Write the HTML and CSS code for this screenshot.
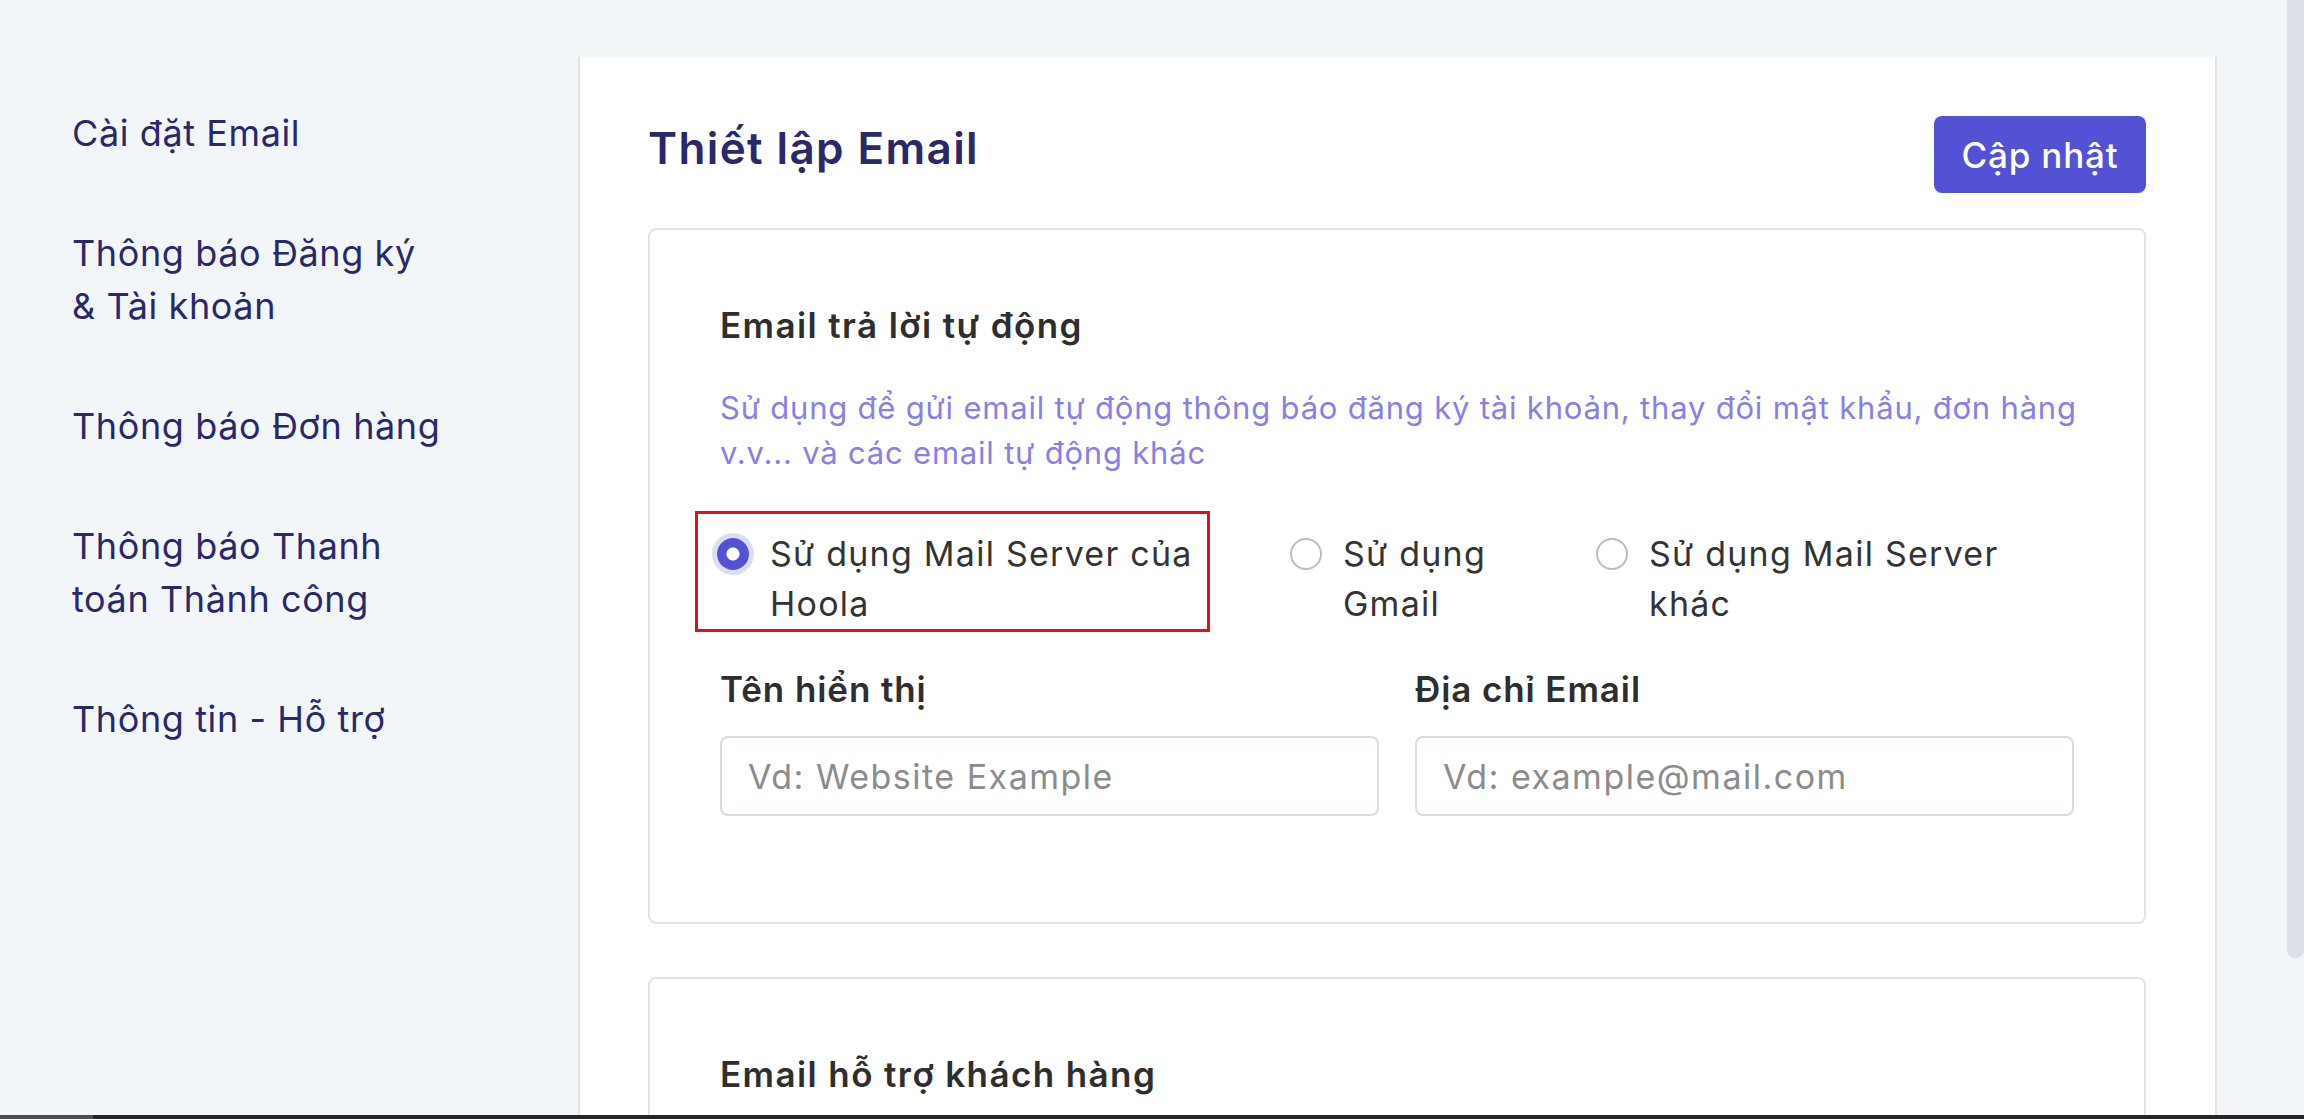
FILE: index.html
```html
<!DOCTYPE html>
<html lang="vi">
  <head>
    <meta charset="UTF-8" />
    <meta name="viewport" content="width=device-width, initial-scale=1.0" />
    <title>Thiết lập Email</title>
    <link rel="stylesheet" href="styles.css">
  </head>
  <body>
    <div class="app">
      <nav class="sidebar">
        <a class="nav-item">Cài đặt Email</a>
        <a class="nav-item">Thông báo Đăng ký<br />&amp; Tài khoản</a>
        <a class="nav-item">Thông báo Đơn hàng</a>
        <a class="nav-item">Thông báo Thanh<br />toán Thành công</a>
        <a class="nav-item">Thông tin - Hỗ trợ</a>
      </nav>

      <main class="panel">
        <div class="panel-head">
          <h1 class="page-title">Thiết lập Email</h1>
          <button class="btn-primary">Cập nhật</button>
        </div>

        <section class="card">
          <h2 class="card-title">Email trả lời tự động</h2>
          <p class="card-desc">
            Sử dụng để gửi email tự động thông báo đăng ký tài khoản, thay đổi mật khẩu, đơn hàng<br />
            v.v... và các email tự động khác
          </p>

          <div class="radios">
            <label class="option option-1 is-marked">
              <span class="radio is-checked"></span>
              <span class="option-text">Sử dụng Mail Server của<br />Hoola</span>
            </label>
            <label class="option option-2">
              <span class="radio"></span>
              <span class="option-text">Sử dụng<br />Gmail</span>
            </label>
            <label class="option option-3">
              <span class="radio"></span>
              <span class="option-text">Sử dụng Mail Server<br />khác</span>
            </label>
          </div>

          <div class="fields">
            <div class="field">
              <div class="field-label">Tên hiển thị</div>
              <input class="field-input" type="text" placeholder="Vd: Website Example" />
            </div>
            <div class="field">
              <div class="field-label">Địa chỉ Email</div>
              <input class="field-input" type="text" placeholder="Vd: example@mail.com" />
            </div>
          </div>
        </section>

        <section class="card card-next">
          <h2 class="card-title">Email hỗ trợ khách hàng</h2>
        </section>
      </main>

      <div class="gutter"></div>
      <div class="scrollbar"><div class="scroll-thumb"></div></div>
    </div>
    <div class="taskbar"><div class="taskbar-start"></div></div>
  </body>
</html>
```

FILE: styles.css
```css
* {
  box-sizing: border-box;
}
:root {
  --bg: #f3f6f9;
  --navy: #29286b;
  --text: #333333;
  --primary: #5352d4;
  --line: #e2e4e8;
}
body {
  margin: 0;
  height: 1119px;
  overflow: hidden;
  background: var(--bg);
  font-family: Inter, "Noto Sans", sans-serif;
  color: var(--text);
}
.app {
  display: flex;
  height: 1115px;
  overflow: hidden;
}
/* --------------- sidebar */
.sidebar {
  width: 578px;
  flex: none;
  padding: 107px 0 0 72px;
  display: flex;
  flex-direction: column;
  gap: 67px;
}
.nav-item {
  font-size: 36px;
  line-height: 53px;
  letter-spacing: 0.6px;
  color: var(--navy);
}
/* --------------- panel */
.panel {
  width: 1639px;
  flex: none;
  margin-top: 57px;
  background: #fff;
  border-left: 2px solid var(--line);
  border-right: 2px solid var(--line);
  padding: 59px 69px 0 68px;
}
.panel-head {
  display: flex;
  justify-content: space-between;
  align-items: flex-start;
}
.page-title {
  margin: 0;
  font-size: 44px;
  line-height: 64px;
  font-weight: 600;
  letter-spacing: 1.4px;
  color: var(--navy);
}
.btn-primary {
  width: 212px;
  height: 77px;
  border: 0;
  border-radius: 8px;
  background: var(--primary);
  color: #fff;
  font-family: inherit;
  font-size: 35px;
  font-weight: 500;
  letter-spacing: 0.8px;
}
.card {
  margin-top: 35px;
  border: 2px solid #e3e3e3;
  border-radius: 8px;
  padding: 70px 70px 106px 70px;
}
.card-next {
  margin-top: 53px;
}
.card-title {
  margin: 0;
  font-size: 35px;
  line-height: 50px;
  font-weight: 600;
  letter-spacing: 1.4px;
  color: #2e2e2e;
}
.card-desc {
  margin: 35px 0 0;
  font-size: 31px;
  line-height: 45px;
  letter-spacing: 0.8px;
  color: #8a7fe6;
  white-space: nowrap;
}
/* --------------- radios */
.radios {
  display: flex;
  gap: 58px;
  margin: 36px 0 0 -25px;
}
.option {
  display: flex;
  align-items: flex-start;
  gap: 21px;
  border: 3px solid transparent;
  padding: 15px 0 0 19px;
  font-size: 34px;
  line-height: 50px;
  letter-spacing: 1.25px;
  color: #333;
}
.option-1 {
  width: 515px;
  height: 121px;
}
.option-2 {
  width: 248px;
}
.option-3 {
  flex: 1;
}
.is-marked {
  border-color: #e01019;
}
.radio {
  flex: none;
  width: 32px;
  height: 32px;
  margin-top: 9px;
  border-radius: 50%;
  border: 2px solid #bdbdbd;
  background: #fff;
}
.radio.is-checked {
  border: 0;
  background: radial-gradient(circle, #fff 0 6px, var(--primary) 7px);
  box-shadow: 0 0 0 5px #dddcf7;
}
/* --------------- fields */
.fields {
  display: grid;
  grid-template-columns: 1fr 1fr;
  column-gap: 36px;
  margin-top: 32px;
}
.field-label {
  font-size: 35px;
  line-height: 50px;
  font-weight: 600;
  letter-spacing: 0.9px;
  color: #2e2e2e;
}
.field-input {
  display: block;
  width: 100%;
  height: 80px;
  margin-top: 22px;
  border: 2px solid #d8dbdf;
  border-radius: 8px;
  padding: 0 26px;
  font-family: inherit;
  font-size: 34px;
  letter-spacing: 1.5px;
  color: #333;
}
.field-input::placeholder {
  color: #8c8c8c;
}
/* --------------- right edge */
.gutter {
  width: 70px;
  flex: none;
}
.scrollbar {
  width: 17px;
  flex: none;
}
.scroll-thumb {
  height: 958px;
  background: #dcdfe6;
  border-radius: 0 0 8px 8px;
}
.taskbar {
  height: 4px;
  background: #262626;
}
.taskbar-start {
  width: 93px;
  height: 100%;
  background: #4d4d4d;
}
```
